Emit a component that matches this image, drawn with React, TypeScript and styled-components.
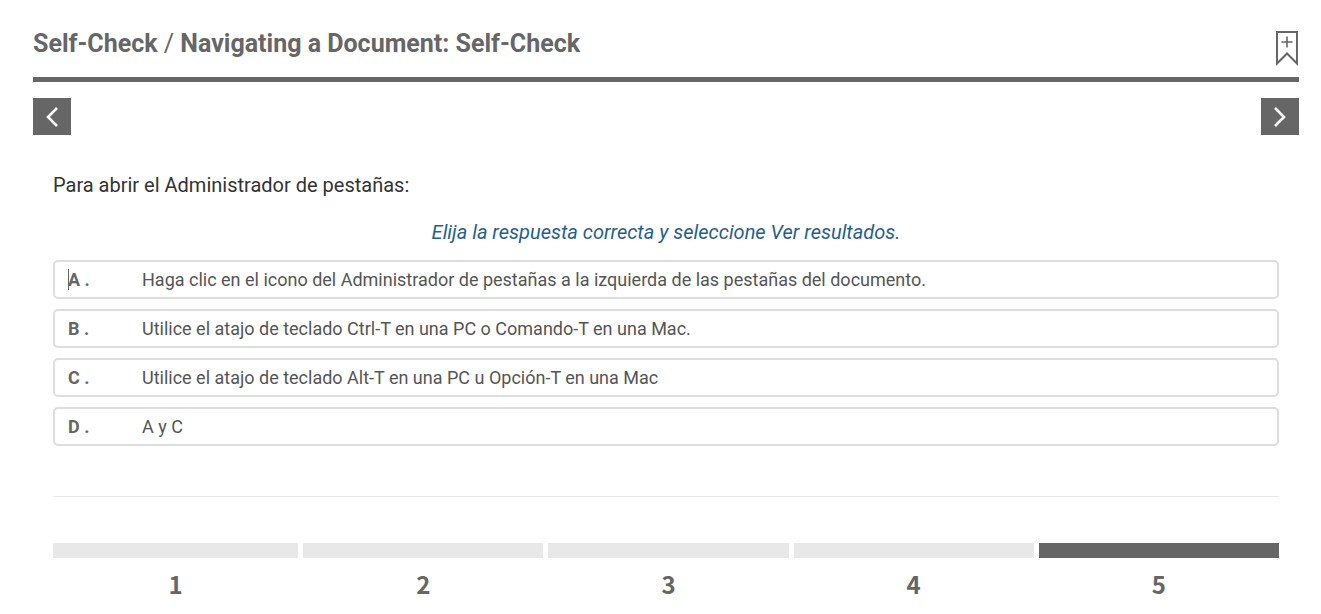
import React, { useState } from "react";
import styled, { createGlobalStyle } from "styled-components";

const GlobalStyle = createGlobalStyle`
  *, *::before, *::after { box-sizing: border-box; }
  body {
    margin: 0;
    background: #fff;
    color: #666;
    font-family: Roboto, "Liberation Sans", sans-serif;
  }
  button { font: inherit; color: inherit; cursor: pointer; }
`;

const Page = styled.div`
  padding: 24px 22px 0 33px;
`;

const Header = styled.header`
  display: flex;
  justify-content: space-between;
  align-items: flex-start;
  height: 58px;
  border-bottom: 5px solid #666;
`;

const Title = styled.h1`
  margin: 0;
  font-size: 25px;
  line-height: 40px;
  font-weight: 700;
`;

const Divider = styled.span`
  font-weight: 400;
`;

const BookmarkButton = styled.button`
  display: flex;
  padding: 6px 0 0;
  border: 0;
  background: none;
`;

const Pager = styled.nav`
  display: flex;
  justify-content: space-between;
  padding-top: 16px;
`;

const PagerButton = styled.button`
  display: flex;
  align-items: center;
  justify-content: center;
  width: 38px;
  height: 37px;
  padding: 0;
  border: 0;
  background: #666;
`;

const Quiz = styled.main`
  padding: 34px 20px 0;
`;

const Question = styled.p`
  margin: 0;
  color: #333;
  font-size: 20px;
  line-height: 32px;
`;

const Instruction = styled.p`
  margin: 15px 0 12px;
  color: #1f618d;
  font-size: 20px;
  line-height: 32px;
  font-style: italic;
  text-align: center;
`;

const Answers = styled.div`
  display: flex;
  flex-direction: column;
  gap: 10px;
`;

const Answer = styled.button`
  display: flex;
  align-items: center;
  height: 39px;
  padding: 0 13px;
  border: 2px solid #dedede;
  border-radius: 5px;
  background: #fff;
  font-size: 18px;
  line-height: 24px;
  text-align: left;
`;

const Letter = styled.span`
  position: relative;
  flex: 0 0 74px;
  font-weight: 700;
`;

const Caret = styled.i`
  position: absolute;
  left: 0;
  top: 1px;
  width: 1px;
  height: 21px;
  background: #666;
`;

const AnswerText = styled.span`
  color: #555;
`;

const Rule = styled.hr`
  margin: 50px 0 46px;
  border: 0;
  border-top: 1px solid #e8e8e8;
`;

const Progress = styled.ol`
  display: grid;
  grid-template-columns: repeat(5, 1fr);
  margin: 0;
  padding: 0;
  list-style: none;
`;

const Step = styled.li`
  & + & { padding-left: 5px; }
`;

const StepButton = styled.button<{ $current: boolean }>`
  display: block;
  width: 100%;
  padding: 0;
  border: 0;
  background: none;
  font-family: "Noto Sans CJK SC", Roboto, sans-serif;
  font-size: 24px;
  line-height: 32px;
  font-weight: 700;
  text-align: center;

  &::before {
    content: "";
    display: block;
    height: 15px;
    margin-bottom: 10px;
    background: ${(p) => (p.$current ? "#666" : "#e8e8e8")};
  }
`;

const answers = [
  ["A", "Haga clic en el icono del Administrador de pestañas a la izquierda de las pestañas del documento."],
  ["B", "Utilice el atajo de teclado Ctrl-T en una PC o Comando-T en una Mac."],
  ["C", "Utilice el atajo de teclado Alt-T en una PC u Opción-T en una Mac"],
  ["D", "A y C"],
];

const Chevron = ({ d }: { d: string }) => (
  <svg width="14" height="22" viewBox="0 0 14 22" fill="none" stroke="#fff" strokeWidth="2.6" aria-hidden="true">
    <path d={d} />
  </svg>
);

export default function App() {
  const [step, setStep] = useState(5);
  return (
    <>
      <GlobalStyle />
      <Page>
        <Header>
          <Title>
            Self-Check <Divider>/</Divider> Navigating a Document: Self-Check
          </Title>
          <BookmarkButton type="button" aria-label="Add bookmark">
            <svg width="24" height="37" viewBox="0 0 24 37" fill="none" stroke="#666" strokeWidth="2">
              <path d="M2 2H22V33.500L12 23.500L2 33.500Z" />
              <path d="M6.500 12H17.500M12 6.500V17.500" strokeWidth="1.600" />
            </svg>
          </BookmarkButton>
        </Header>
        <Pager aria-label="Questions">
          <PagerButton type="button" aria-label="Previous">
            <Chevron d="M12 2L3 11L12 20" />
          </PagerButton>
          <PagerButton type="button" aria-label="Next">
            <Chevron d="M2 2L11 11L2 20" />
          </PagerButton>
        </Pager>
        <Quiz>
          <Question>Para abrir el Administrador de pestañas:</Question>
          <Instruction>Elija la respuesta correcta y seleccione Ver resultados.</Instruction>
          <Answers>
            {answers.map(([letter, text], i) => (
              <Answer type="button" key={letter}>
                <Letter>
                  {i === 0 && <Caret />}
                  {letter} .
                </Letter>
                <AnswerText>{text}</AnswerText>
              </Answer>
            ))}
          </Answers>
          <Rule />
          <Progress>
            {[1, 2, 3, 4, 5].map((n) => (
              <Step key={n}>
                <StepButton type="button" $current={n === step} onClick={() => setStep(n)}>
                  {n}
                </StepButton>
              </Step>
            ))}
          </Progress>
        </Quiz>
      </Page>
    </>
  );
}
